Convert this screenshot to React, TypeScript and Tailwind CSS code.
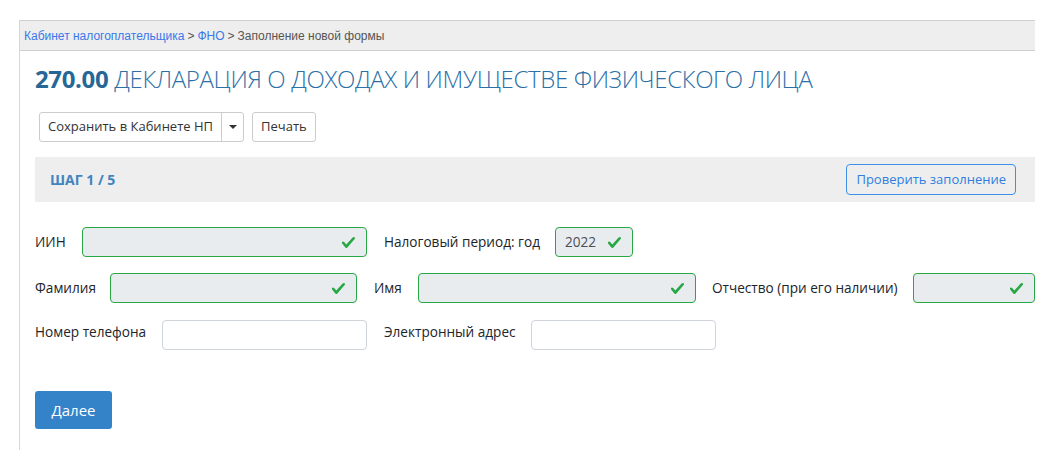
import { ReactNode } from 'react';

const ValidIcon = () => (
  <svg viewBox="0 0 8 8" className="w-[15px] h-[15px] shrink-0" fill="#28a745">
    <path d="M2.3 6.73L.6 4.53c-.4-1.04.46-1.4 1.1-.8l1.1 1.4 3.4-3.8c.6-.63 1.6-.27 1.2.7l-4 4.6c-.43.5-.8.4-1.1.1z" />
  </svg>
);

const Label = ({ children, w }: { children: ReactNode; w: string }) => (
  <label className={`${w} shrink-0 text-[13.6px] text-[#212529]`}>{children}</label>
);

const ValidField = ({ w, value }: { w: string; value?: string }) => (
  <div className={`${w} h-[30px] shrink-0 flex items-center justify-between pl-[9px] pr-[10px] bg-[#e9ecef] border border-[#28a745] rounded-[4px] text-[13.6px] text-[#495057]`}>
    <span>{value}</span>
    <ValidIcon />
  </div>
);

const EmptyField = ({ w }: { w: string }) => (
  <input className={`${w} h-[30px] shrink-0 bg-white border border-[#ced4da] rounded-[4px] px-2 text-[13px] outline-none`} />
);

const App = () => {
  return (
    <div className="min-h-[450px] bg-white pt-[20px] pl-[19px] font-['Open_Sans',sans-serif]">
      <div className="w-[1016px] min-h-[430px] border-l border-[#d6d6d6]">
        <div className="h-[31px] flex items-center pl-[4px] bg-[#eeeeee] border-y border-[#d0d0d0] font-['Liberation_Sans',Arial,sans-serif] text-[12px] text-[#555]">
          <a className="text-[#3a78ea]">Кабинет налогоплательщика</a>
          <span className="mx-[3px]">&gt;</span>
          <a className="text-[#3a78ea]">ФНО</a>
          <span className="mx-[3px]">&gt;</span>
          <span>Заполнение новой формы</span>
        </div>

        <div className="pl-[15px]">
          <h1 className="mt-[13px] text-[24px] leading-[30px] text-[#2b70a6] font-light tracking-[-0.36px]">
            <span className="font-bold text-[#266796]">270.00</span> ДЕКЛАРАЦИЯ О ДОХОДАХ И ИМУЩЕСТВЕ ФИЗИЧЕСКОГО ЛИЦА
          </h1>

          <div className="mt-[18px] ml-[4px] flex items-center gap-[8px] text-[13px] text-[#333]">
            <div className="flex h-[30px] border border-[#cccccc] rounded-[3px] bg-white">
              <button className="px-[8px] border-r border-[#cccccc]">Сохранить в Кабинете НП</button>
              <button className="w-[21px] flex items-center justify-center">
                <span className="w-0 h-0 border-x-[4px] border-x-transparent border-t-[4px] border-t-[#333]" />
              </button>
            </div>
            <button className="h-[30px] px-[8px] border border-[#cccccc] rounded-[3px] bg-white">Печать</button>
          </div>

          <div className="mt-[15px] h-[45px] flex items-center justify-between pl-[15px] pr-[19px] bg-[#eeeeee]">
            <span className="text-[14px] font-bold text-[#3f84bd]">ШАГ 1 / 5</span>
            <button className="h-[31px] px-[9px] border border-[#3d8fe8] rounded-[4px] text-[13px] text-[#2f7ee0]">
              Проверить заполнение
            </button>
          </div>

          <div className="mt-[25px] flex flex-col gap-[16px]">
            <div className="flex items-center">
              <Label w="w-[47px]">ИИН</Label>
              <ValidField w="w-[285px]" />
              <div className="w-[17px]" />
              <Label w="w-[171px]">Налоговый период: год</Label>
              <ValidField w="w-[78px]" value="2022" />
            </div>

            <div className="flex items-center">
              <Label w="w-[75px]">Фамилия</Label>
              <ValidField w="w-[247px]" />
              <div className="w-[17px]" />
              <Label w="w-[44px]">Имя</Label>
              <ValidField w="w-[278px]" />
              <div className="w-[16px]" />
              <Label w="w-[201px]">Отчество (при его наличии)</Label>
              <ValidField w="w-[122px]" />
            </div>

            <div className="mt-[1px] flex items-start">
              <Label w="w-[127px] pt-[2px]">Номер телефона</Label>
              <EmptyField w="w-[205px]" />
              <div className="w-[17px]" />
              <Label w="w-[147px] pt-[2px]">Электронный адрес</Label>
              <EmptyField w="w-[185px]" />
            </div>
          </div>

          <button className="mt-[41px] h-[38px] w-[77px] rounded-[3px] bg-[#3483c9] text-white text-[15px]">
            Далее
          </button>
        </div>
      </div>
    </div>
  );
};

export default App;
